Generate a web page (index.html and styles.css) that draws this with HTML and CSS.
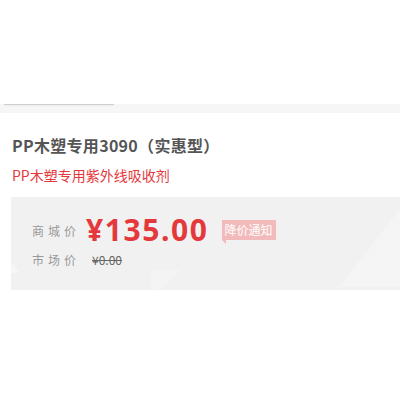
FILE: index.html
```html
<!DOCTYPE html>
<html lang="zh-CN">
<head>
    <meta charset="UTF-8">
    <meta name="viewport" content="width=device-width, initial-scale=1.0">
    <title>PP木塑专用3090（实惠型）</title>
    <link rel="stylesheet" href="styles.css">
</head>
<body>
    <div class="gallery"></div>
    <div class="thumbs">
        <div class="thumb-line"></div>
    </div>

    <div class="info">
        <h1 class="name">PP木塑专用3090（实惠型）</h1>
        <p class="slogan">PP木塑专用紫外线吸收剂</p>
    </div>

    <div class="price-box">
        <div class="row">
            <span class="label">商城价</span>
            <span class="price">¥135.00</span>
            <span class="notice">降价通知</span>
        </div>
        <div class="row">
            <span class="label">市场价</span>
            <span class="market">¥0.00</span>
        </div>
    </div>
</body>
</html>
```

FILE: styles.css
```css
body {
    margin: 0;
    font-family: "Noto Sans CJK SC", "Noto Sans", sans-serif;
    background: #fff;
    color: #333;
}
.gallery {
    height: 104px;
}
.thumbs {
    height: 9px;
    background: #f6f6f6;
}
.thumb-line {
    width: 110px;
    margin-left: 4px;
    border-top: 1px solid #cfcfcf;
    box-shadow: 0 1px 2px rgba(0,0,0,0.06);
}
.info {
    padding: 0 12px;
}
.name {
    margin: 20px 0 0;
    font-size: 16px;
    font-weight: bold;
    color: #555;
    line-height: 24px;
    letter-spacing: 0.3px;
}
.slogan {
    margin: 7px 0 0;
    font-size: 14px;
    color: #e4393c;
    line-height: 22px;
}
.price-box {
    margin: 11px 0 0 11px;
    height: 93px;
    padding: 17px 0 0 21px;
    box-sizing: border-box;
    background:
        linear-gradient(128deg, transparent 62%, rgba(255,255,255,0.25) 62%) right top / 90px 90px no-repeat,
        linear-gradient(52deg, rgba(255,255,255,0.35) 20%, transparent 20%) left 46px / 20px 30px no-repeat,
        linear-gradient(-45deg, transparent 50%, rgba(255,255,255,0.2) 50%) 140px bottom / 40px 20px no-repeat,
        #f1f1f1;
}
.row {
    display: flex;
    align-items: center;
}
.label {
    width: 54px;
    font-size: 12px;
    color: #999;
    letter-spacing: 4px;
}
.price {
    font-family: "Noto Sans", sans-serif;
    font-size: 30px;
    font-weight: bold;
    color: #e4393c;
    line-height: 32px;
    letter-spacing: 1.6px;
}
.notice {
    position: relative;
    margin-left: 13px;
    padding: 0 3px;
    font-size: 12px;
    line-height: 20px;
    color: #fff;
    background: #f2babb;
}
.notice::after {
    content: "";
    position: absolute;
    left: 0;
    bottom: -4px;
    border-top: 4px solid #f2babb;
    border-left: 4px solid transparent;
}
.row + .row {
    margin-top: 5px;
}
.market {
    margin-left: 6px;
    font-size: 12px;
    color: #666;
    text-decoration: line-through;
}
```
